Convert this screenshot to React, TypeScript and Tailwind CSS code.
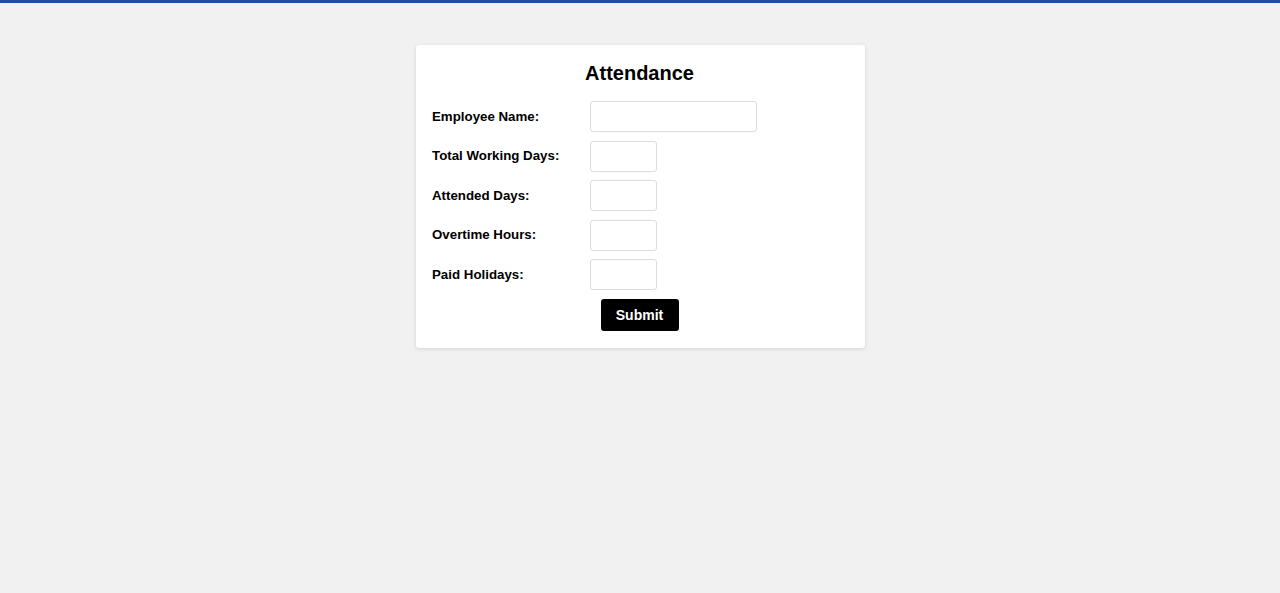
import { useState } from "react";

const fields = [
  { id: "name", label: "Employee Name:", wide: true },
  { id: "total", label: "Total Working Days:" },
  { id: "attended", label: "Attended Days:" },
  { id: "overtime", label: "Overtime Hours:" },
  { id: "holidays", label: "Paid Holidays:" },
];

export default function App() {
  const [values, setValues] = useState<Record<string, string>>({});

  return (
    <div
      className="min-h-[593px] bg-[#f1f1f1] border-t-[3px] border-[#1c4f9c]"
      style={{ fontFamily: '"Liberation Sans", Arial, sans-serif' }}
    >
      <div className="pt-[42px] pl-[1px] flex justify-center">
        <form
          className="w-[449px] bg-white rounded-[3px] shadow-[0_1px_4px_rgba(0,0,0,0.12)] pl-4 pr-[18px] pt-[17px] pb-[17px]"
          onSubmit={(e) => e.preventDefault()}
        >
          <h2 className="text-[20px] leading-[23px] font-bold text-black text-center">
            Attendance
          </h2>
          <div className="mt-[16px] flex flex-col gap-[8.5px]">
            {fields.map((f) => (
              <div key={f.id} className="flex items-center">
                <label
                  htmlFor={f.id}
                  className="w-[158px] text-[13.3px] font-bold text-black"
                >
                  {f.label}
                </label>
                <input
                  id={f.id}
                  value={values[f.id] || ""}
                  onChange={(e) =>
                    setValues({ ...values, [f.id]: e.target.value })
                  }
                  className={`h-[31px] border border-[#dcdcdc] rounded-[3px] bg-white px-2 text-sm outline-none ${
                    f.wide ? "w-[167px]" : "w-[67px]"
                  }`}
                />
              </div>
            ))}
          </div>
          <div className="mt-[9px] flex justify-center">
            <button
              type="submit"
              className="w-[78px] h-[32px] bg-black text-white text-[14px] font-bold rounded-[3px]"
            >
              Submit
            </button>
          </div>
        </form>
      </div>
    </div>
  );
}
